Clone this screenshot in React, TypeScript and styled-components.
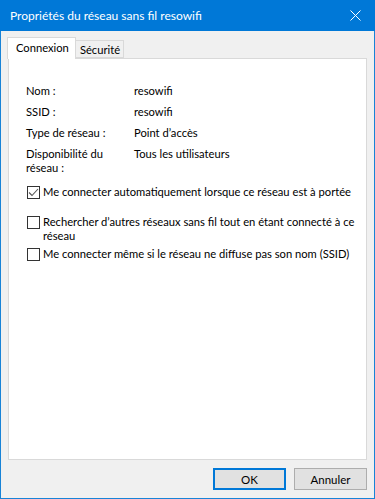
import styled, { createGlobalStyle } from 'styled-components'

const Global = createGlobalStyle`
    html, body {
        margin: 0;
        padding: 0;
        background: #f0f0f0;
    }
    * {
        box-sizing: border-box;
    }
`

const infos = [
    { label: "Nom :", value: "resowifi" },
    { label: "SSID :", value: "resowifi" },
    { label: "Type de réseau :", value: "Point d’accès" },
    { label: <>Disponibilité du<br />réseau :</>, value: "Tous les utilisateurs" },
]

const Window = styled.div`
    width: 375px;
    height: 499px;
    display: flex;
    flex-direction: column;
    background: #f0f0f0;
    border: 1px solid #1883d7;
    border-top: none;
    font-family: Lato, "Liberation Sans", sans-serif;
    font-size: 11.2px;
    color: #000;
`

const TitleBar = styled.div`
    height: 31px;
    margin: 0 -1px;
    padding: 0 8px 0 10px;
    background: #0078d7;
    color: #fff;
    display: flex;
    align-items: center;
    justify-content: space-between;
    font-size: 12px;
`

const Close = styled.button`
    width: 24px;
    height: 24px;
    border: none;
    background: none;
    padding: 0;
    display: flex;
    align-items: center;
    justify-content: center;
`

const Body = styled.div`
    flex: 1;
    display: flex;
    flex-direction: column;
    padding: 6px 7px 0 6px;
`

const TabStrip = styled.div`
    height: 22px;
    display: flex;
    align-items: flex-end;
    position: relative;
    z-index: 1;
`

const Tab = styled.div<{ $active?: boolean }>`
    height: ${p => (p.$active ? 22 : 18)}px;
    padding: ${p => (p.$active ? '0 6px 2px 8px' : '0 3px 0 4px')};
    margin-bottom: ${p => (p.$active ? 0 : 1)}px;
    display: flex;
    align-items: center;
    background: ${p => (p.$active ? '#fff' : '#f0f0f0')};
    border: 1px solid #d9d9d9;
    border-bottom: ${p => (p.$active ? 'none' : '1px solid #d9d9d9')};
    border-left: ${p => (p.$active ? '1px solid #d9d9d9' : 'none')};
`

const Panel = styled.div`
    flex: 1;
    margin-top: -1px;
    margin-left: 1px;
    background: #fff;
    border: 1px solid #d9d9d9;
    padding: 25px 0 0 17px;
    display: flex;
    flex-direction: column;
`

const InfoGrid = styled.div`
    display: grid;
    grid-template-columns: 108px 1fr;
    row-gap: 7px;
    line-height: 14px;
`

const Options = styled.div`
    display: flex;
    flex-direction: column;
    margin-top: 10px;
    line-height: 14px;
`

const Option = styled.label<{ $gap: number }>`
    display: flex;
    align-items: flex-start;
    gap: 3px;
    margin-top: ${p => p.$gap}px;
    margin-left: 1px;
`

const Box = styled.span`
    width: 13px;
    height: 13px;
    flex: none;
    margin-top: 1px;
    border: 1px solid #333;
    background: #fff;
    display: flex;
    align-items: center;
    justify-content: center;
`

const Footer = styled.div`
    height: 38px;
    display: flex;
    justify-content: flex-end;
    align-items: flex-start;
    gap: 8px;
    padding: 8px 0 0 0;
`

const Button = styled.button<{ $default?: boolean }>`
    width: 73px;
    height: 22px;
    background: #e1e1e1;
    border: ${p => (p.$default ? '2px solid #0078d7' : '1px solid #adadad')};
    font-family: inherit;
    font-size: 11.5px;
    color: #000;
    padding: 0;
`

function Checkbox({ checked }: { checked?: boolean }) {
    return (
        <Box>
            {checked && (
                <svg width="11" height="11" viewBox="0 0 11 11">
                    <polyline points="1,5.5 4,8.5 10,2" fill="none" stroke="#555" strokeWidth="1.1" />
                </svg>
            )}
        </Box>
    )
}

export default function App() {
    return (
        <>
            <Global />
            <Window>
                <TitleBar>
                    <span>Propriétés du réseau sans fil resowifi</span>
                    <Close aria-label="Fermer">
                        <svg width="11" height="11" viewBox="0 0 11 11">
                            <path d="M0.5 0.5 L10.5 10.5 M10.5 0.5 L0.5 10.5" stroke="#fff" strokeWidth="1" />
                        </svg>
                    </Close>
                </TitleBar>
                <Body>
                    <TabStrip>
                        <Tab $active>Connexion</Tab>
                        <Tab>Sécurité</Tab>
                    </TabStrip>
                    <Panel>
                        <InfoGrid>
                            {infos.map((item, i) => (
                                <>
                                    <span key={'l' + i}>{item.label}</span>
                                    <span key={'v' + i}>{item.value}</span>
                                </>
                            ))}
                        </InfoGrid>
                        <Options>
                            <Option $gap={0}>
                                <Checkbox checked />
                                <span>Me connecter automatiquement lorsque ce réseau est à portée</span>
                            </Option>
                            <Option $gap={16}>
                                <Checkbox />
                                <span>Rechercher d’autres réseaux sans fil tout en étant connecté à ce<br />réseau</span>
                            </Option>
                            <Option $gap={4}>
                                <Checkbox />
                                <span>Me connecter même si le réseau ne diffuse pas son nom (SSID)</span>
                            </Option>
                        </Options>
                    </Panel>
                    <Footer>
                        <Button $default>OK</Button>
                        <Button>Annuler</Button>
                    </Footer>
                </Body>
            </Window>
        </>
    )
}
